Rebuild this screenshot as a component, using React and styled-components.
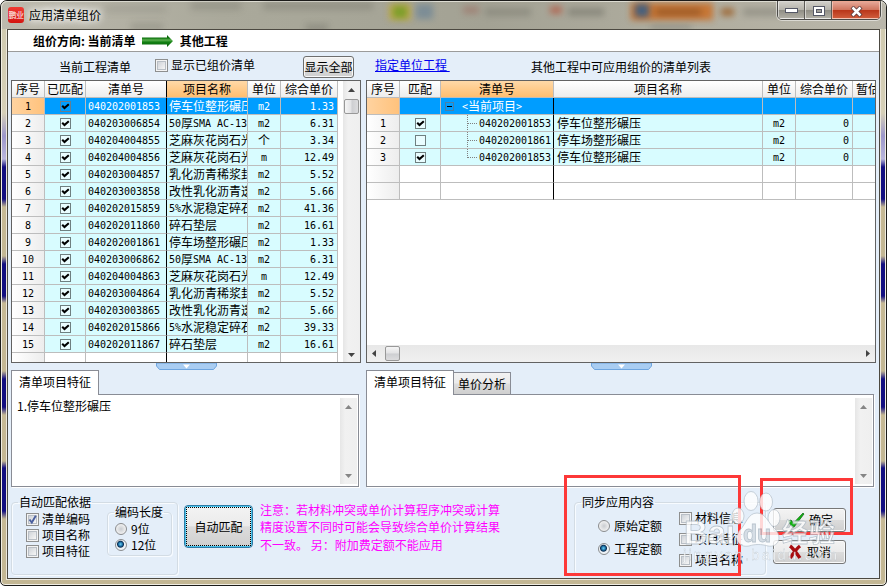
import React, { useState } from 'react';
import styled, { createGlobalStyle, css } from 'styled-components';

const UI_FONT = '"Noto Sans CJK SC", sans-serif';

const GlobalStyle = createGlobalStyle`
  body {
    margin: 0;
    overflow: hidden;
    font: 12px/16px ${UI_FONT};
    color: #000;
  }
  * {
    box-sizing: border-box;
  }
`;

const Window = styled.div`
  position: relative;
  width: 887px;
  height: 586px;
  overflow: hidden;
  border: 1px solid #1c1c1a;
  border-radius: 7px 7px 5px 5px;
  background: linear-gradient(
    #cfc9ae 0, #d6d0b8 112px, #9c97cb 135px, #b9b6dc 158px, #120e80 166px, #120e80 198px,
    #c6b995 206px, #c3b794 255px, #120e80 263px, #120e80 295px, #c6b995 302px, #c3b794 370px,
    #120e80 378px, #120e80 406px, #c6b995 414px, #c3b794 460px, #120e80 467px, #120e80 510px,
    #c6b995 518px, #c3b794 100%
  );
  box-shadow: inset 0 0 0 1px #f0ede2;
`;

const TitleBar = styled.header`
  position: relative;
  display: flex;
  align-items: flex-start;
  height: 28px;
  overflow: hidden;
  border-radius: 6px 6px 0 0;
  background: linear-gradient(90deg, #bdbaae, #aaa99b 25%, #a3a294 55%, #b1aea0 80%, #bab7ab);
  box-shadow: inset 0 1px 0 #dddcd2, inset 1px 0 0 #e8e6db;
`;

/* toolbar of the window behind, seen through the glass */
const Smudge = styled.i`
  position: absolute;
  left: ${({ $x }) => $x}px;
  top: ${({ $y = 5 }) => $y}px;
  width: ${({ $w }) => $w}px;
  height: ${({ $h = 8 }) => $h}px;
  background: ${({ $color = '#77766c' }) => $color};
  opacity: ${({ $alpha = 0.45 }) => $alpha};
  filter: blur(3px);
`;

const Logo = styled.span`
  width: 16px;
  height: 16px;
  margin: 6px 5px 0 7px;
  border-radius: 3px;
  background: linear-gradient(#ef3a33, #d4140f);
  color: #fff;
  font-size: 8px;
  line-height: 15px;
  text-align: center;
  letter-spacing: -0.5px;
  position: relative;
`;

const Title = styled.h1`
  position: relative;
  flex: 1;
  margin: 5px 0 0;
  font-size: 12px;
  font-weight: 400;
  line-height: 17px;
  text-shadow: 0 0 6px #fff, 0 0 8px #fff, 0 0 12px #fff;
`;

const WindowButtons = styled.div`
  position: relative;
  display: flex;
  width: 104px;
  height: 20px;
  margin: -1px 5px 0 0;
  overflow: hidden;
  border: 1px solid #4b4a47;
  border-radius: 0 0 5px 5px;
  box-shadow: 0 0 0 1px rgba(255, 255, 255, 0.5);
`;

const WindowButton = styled.button`
  display: flex;
  align-items: center;
  justify-content: center;
  width: ${({ $close }) => ($close ? 48 : 27)}px;
  padding: 2px 0 0;
  border: 1px solid rgba(255, 255, 255, 0.55);
  background: linear-gradient(#d0cec8, #b5b3ab 48%, #8f8d84 50%, #b0aea4);
  & + & {
    box-shadow: -1px 0 0 #5d5b57;
  }
  ${({ $close }) => $close && css`
    border-color: rgba(255, 220, 205, 0.6);
    background: linear-gradient(#e5a696, #d0765f 48%, #b83519 50%, #cf5b3b);
  `}
`;

const Client = styled.main`
  width: 873px;
  height: 550px;
  margin-left: 6px;
  border: 1px solid #4c4941;
  background: #e4eef9;
  box-shadow: 0 0 0 1px #ebe7dc;
`;

const DirectionBar = styled.div`
  display: flex;
  align-items: center;
  height: 22px;
  padding-left: 25px;
  border-bottom: 1px solid #9b9b9b;
  background: #fff;
  font-weight: 700;
  svg {
    margin: 0 7px 0 6px;
  }
`;

const ToolRow = styled.div`
  display: flex;
  align-items: flex-start;
  height: 28px;
  padding: 5px 0 0 51px;
`;

const Caption = styled.span`
  margin-top: ${({ $top = 2 }) => $top}px;
  width: ${({ $width }) => $width}px;
  white-space: nowrap;
`;

const ShowAll = styled.button`
  width: 51px;
  height: 22px;
  margin: -1px 21px 0 0;
  padding: 0;
  border: 1px solid #6e6e6e;
  border-radius: 3px;
  background: linear-gradient(#f2f2f2, #e9e9e9 48%, #dadada 52%, #cfcfcf);
  box-shadow: inset 0 0 0 1px #f8f8f8;
  font: 12px/18px ${UI_FONT};
  white-space: nowrap;
`;

const UnitLink = styled.a`
  width: 156px;
  color: #0000f0;
  text-decoration: underline;
  white-space: pre;
  line-height: 16px;
`;

const Tables = styled.div`
  display: flex;
  gap: 5px;
  height: 283px;
  padding-left: 3px;
`;

const GridFrame = styled.div`
  display: flex;
  flex-direction: ${({ $column }) => ($column ? 'column' : 'row')};
  justify-content: space-between;
  width: ${({ $width }) => $width}px;
  border: 1px solid #626262;
  background: #fff;
  overflow: hidden;
`;

const GridBody = styled.div`
  overflow: hidden;
`;

const GridRow = styled.div`
  display: grid;
  grid-template-columns: ${({ $columns }) => $columns};
  height: 17px;
`;

const Cell = styled.div`
  display: flex;
  align-items: center;
  justify-content: ${({ $align = 'center' }) => $align};
  min-width: 0;
  height: 17px;
  padding: ${({ $pad = '0' }) => $pad};
  overflow: hidden;
  border-right: 1px solid ${({ $divider }) => ($divider ? '#000' : '#bdbdbd')};
  border-bottom: 1px solid #bdbdbd;
  background: ${({ $bg = '#d8fcff' }) => $bg};
  color: ${({ $color = '#000' }) => $color};
  line-height: 16px;
  white-space: pre;
`;

const Ascii = styled.span`
  padding-top: 1px;
  font: 10px/16px "DejaVu Sans Mono", monospace;
  letter-spacing: -0.02px;
`;

const Box = styled.span`
  display: flex;
  flex: none;
  align-items: center;
  justify-content: center;
  width: 11px;
  height: 11px;
  border: 1px solid ${({ $dim }) => ($dim ? '#667e90' : '#6f7f80')};
  background: ${({ $dim }) => ($dim ? 'transparent' : '#e9fdff')};
`;

const TreeNode = styled.span`
  align-self: stretch;
  flex: none;
  width: 10px;
  height: ${({ $last }) => ($last ? 9 : 17)}px;
  margin-right: 2px;
  border-left: 1px dotted #808080;
  background: repeating-linear-gradient(90deg, #808080 0 1px, transparent 1px 2px) 0 8px / 10px 1px no-repeat;
`;

const TreeToggle = styled.span`
  display: flex;
  align-items: center;
  justify-content: center;
  width: 9px;
  height: 9px;
  margin-right: 8px;
  border: 1px solid #4c7fa5;
  &::after {
    content: '';
    width: 5px;
    height: 1px;
    background: #000;
  }
`;

const VScroll = styled.div`
  display: flex;
  flex-direction: column;
  align-items: center;
  width: 17px;
  padding: ${({ $pad = '7px 0 5px' }) => $pad};
  background: linear-gradient(90deg, #e6e6e6, #f1f1f1 30%, #efefef);
`;

const HScroll = styled.div`
  display: flex;
  align-items: center;
  height: 17px;
  padding: 0 5px 0 5px;
  background: linear-gradient(#e8e8e8, #f0f0f0);
`;

const Thumb = styled.span`
  width: 15px;
  height: 15px;
  border: 1px solid #989898;
  border-radius: 2px;
  background: linear-gradient(${({ $angle = 180 }) => $angle}deg, #f5f5f5, #e2e2e4 48%, #cdced1 52%, #dcdcde);
`;

const Spacer = styled.span`
  flex: 1;
`;

const Splitters = styled.div`
  display: flex;
  height: 7px;
  padding-left: 148px;
  gap: 374px;
`;

const Details = styled.div`
  display: flex;
  gap: 7px;
  padding-left: 3px;
`;

const Detail = styled.section`
  width: ${({ $width }) => $width}px;
`;

const Tabs = styled.div`
  display: flex;
  align-items: flex-end;
  height: 24px;
`;

const Tab = styled.button`
  width: ${({ $active }) => ($active ? 88 : 57)}px;
  height: ${({ $active }) => ($active ? 25 : 22)}px;
  margin-bottom: ${({ $active }) => ($active ? -1 : 0)}px;
  padding: 0 0 ${({ $active }) => ($active ? 2 : 0)}px;
  border: 1px solid #898c95;
  border-bottom: 0;
  border-left-width: ${({ $active }) => ($active ? 1 : 0)}px;
  background: ${({ $active }) => ($active ? '#fff' : 'linear-gradient(#f2f2f2, #ebebeb 48%, #dddddd 52%, #cfcfcf)')};
  font: 12px/16px ${UI_FONT};
  white-space: nowrap;
  position: relative;
`;

const Memo = styled.div`
  display: flex;
  justify-content: space-between;
  height: 93px;
  padding: 3px 1px 2px 5px;
  border: 1px solid #898c95;
  background: #fff;
  box-shadow: 1px 1px 0 #fff;
`;

const Footer = styled.footer`
  display: flex;
  align-items: flex-start;
  padding: 7px 0 0 3px;
`;

const Group = styled.fieldset`
  display: flex;
  flex: none;
  width: ${({ $width }) => $width}px;
  height: ${({ $height }) => $height}px;
  min-width: 0;
  margin: ${({ $margin = '0' }) => $margin};
  padding: 0;
  border: 1px solid #d3dce4;
  border-radius: 4px;
  box-shadow: inset 1px 1px 0 #f7fbff, 1px 1px 0 #f7fbff;
  legend {
    height: 16px;
    margin-left: 6px;
    padding: 0 1px;
  }
`;

const Options = styled.div`
  display: flex;
  flex-direction: column;
  gap: ${({ $gap = 0 }) => $gap}px;
  padding: ${({ $pad }) => $pad};
`;

const Option = styled.label`
  display: flex;
  align-items: center;
  gap: ${({ $gap = 3 }) => $gap}px;
  height: 16px;
  white-space: nowrap;
`;

const Check = styled.span`
  display: flex;
  flex: none;
  width: 13px;
  height: 13px;
  border: 1px solid #8e8f8f;
  background: linear-gradient(135deg, #c4c9d0, #f5f5f5 80%);
  box-shadow: inset 0 0 0 1px #f4f4f4, inset 0 0 0 2px #b9bfc6;
`;

const Radio = styled.span`
  flex: none;
  width: 12px;
  height: 12px;
  border: 1px solid #8a8c8e;
  border-radius: 50%;
  background: ${({ $on }) => ($on
    ? 'radial-gradient(circle at 45% 42%, #6cd0f4 0, #1c6fa5 2px, #0b2e52 3px, #eef3f7 4px)'
    : 'radial-gradient(circle, #c9ccd0, #f3f3f3 75%)')};
`;

const MatchButton = styled.button`
  width: 69px;
  height: 43px;
  margin: 11px 7px 0 6px;
  padding: 1px;
  border: 1px solid #2f7ba5;
  border-radius: 4px;
  background: linear-gradient(#f3f3f3, #ebebeb 48%, #dcdcdc 51%, #cfcfcf);
  box-shadow: inset 0 0 0 1px #48c4ee;
  font: 12px/16px ${UI_FONT};
  span {
    display: flex;
    align-items: center;
    justify-content: center;
    height: 100%;
    border: 1px dotted #000;
  }
`;

const Notice = styled.p`
  width: 314px;
  margin: 7px 0 0;
  color: #ff00ff;
  line-height: 17.3px;
  white-space: pre;
`;

const Actions = styled.div`
  display: flex;
  flex-direction: column;
  gap: 8px;
  padding: 14px 0 0 7px;
`;

const Action = styled.button`
  display: flex;
  align-items: center;
  gap: 4px;
  width: 73px;
  height: 24px;
  padding: 0 0 0 13px;
  border: 1px solid #777;
  border-radius: 3px;
  background: linear-gradient(#f3f3f3, #ebebeb 48%, #dcdcdc 51%, #cfcfcf);
  box-shadow: inset 0 0 0 1px #fafafa;
  font: 12px/16px ${UI_FONT};
`;

const Marker = styled.div`
  position: absolute;
  left: ${({ $x }) => $x}px;
  top: ${({ $y }) => $y}px;
  width: ${({ $w }) => $w}px;
  height: ${({ $h }) => $h}px;
  border: 3px solid #fd3838;
`;

const Watermark = styled.svg`
  position: absolute;
  left: 679px;
  top: 484px;
  pointer-events: none;
`;

const LEFT_COLUMNS = '33px 41px 81px 81px 33px 57px';
const RIGHT_COLUMNS = '33px 41px 113px 209px 33px 57px 57px';
const HEAD = 'linear-gradient(#ffffff, #ececec)';
const HEAD_ACTIVE = 'linear-gradient(#ffd9a8, #ffbe70)';
const INDEX = 'linear-gradient(90deg, #ffffff, #ededed)';
const INDEX_ACTIVE = 'linear-gradient(90deg, #ffd3a0, #ffc27c)';
const SELECTED = '#009dff';

const items = [
  ['040202001853', '停车位整形碾压', 'm2', '1.33'],
  ['040203006854', '50厚SMA AC-13', 'm2', '6.31'],
  ['040204004855', '芝麻灰花岗石光', '个', '3.34'],
  ['040204004856', '芝麻灰花岗石光', 'm', '12.49'],
  ['040203004857', '乳化沥青稀浆封', 'm2', '5.52'],
  ['040203003858', '改性乳化沥青透', 'm2', '5.66'],
  ['040202015859', '5%水泥稳定碎石', 'm2', '41.36'],
  ['040202011860', '碎石垫层', 'm2', '16.61'],
  ['040202001861', '停车场整形碾压', 'm2', '1.33'],
  ['040203006862', '50厚SMA AC-13', 'm2', '6.31'],
  ['040204004863', '芝麻灰花岗石光', 'm', '12.49'],
  ['040203004864', '乳化沥青稀浆封', 'm2', '5.52'],
  ['040203003865', '改性乳化沥青透', 'm2', '5.66'],
  ['040202015866', '5%水泥稳定碎石', 'm2', '39.33'],
  ['040202011867', '碎石垫层', 'm2', '16.61'],
];

const candidates = [
  { code: '040202001853', name: '停车位整形碾压', matched: true },
  { code: '040202001861', name: '停车场整形碾压', matched: false },
  { code: '040202001853', name: '停车位整形碾压', matched: true },
];

// latin runs use the narrow fixed-width face, the rest stays in the CJK one
const Mixed = ({ children }) => children
  .split(/([\x20-\x7e]+)/)
  .filter(Boolean)
  .map((part, index) => (/^[\x20-\x7e]/.test(part) ? <Ascii key={index}>{part}</Ascii> : <span key={index}>{part}</span>));

const CheckMark = ({ color = '#000' }) => (
  <svg width="9" height="9" viewBox="0 0 9 9">
    <path d="M1.2 3.8 L3.5 6 L7.8 2.2" fill="none" stroke={color} strokeWidth="2.1" />
  </svg>
);

// taller tick of the themed check boxes
const BlueTick = () => (
  <svg width="11" height="11" viewBox="0 0 11 11">
    <path d="M2.5 5.500 L4.8 8.500 L8.800 1.800" fill="none" stroke="#4a5f9e" strokeWidth="1.9" />
  </svg>
);

const GridCheck = ({ checked, dim }) => (
  <Box $dim={dim}>{checked && <CheckMark />}</Box>
);

const Arrow = ({ dir, color = '#444' }) => {
  const points = {
    up: '0,4 3.5,0 7,4',
    down: '0,0 7,0 3.5,4',
    left: '4,0 4,7 0,3.5',
    right: '0,0 4,3.5 0,7',
  };
  const flat = dir === 'up' || dir === 'down';
  return (
    <svg width={flat ? 7 : 4} height={flat ? 4 : 7}>
      <polygon points={points[dir]} fill={color} />
    </svg>
  );
};

const Handle = () => (
  <svg width="61" height="7" viewBox="0 0 61 7">
    <path d="M0.5 0 V3 L3.5 6.5 H57.5 L60.5 3 V0 Z" fill="#a9cdf2" stroke="#6fa6e0" />
    <path d="M27 1.5 H34 L30.5 5.5 Z" fill="#fff" />
  </svg>
);

const GreenArrow = () => (
  <svg width="31" height="12" viewBox="0 0 31 12">
    <defs>
      <linearGradient id="shaft" x1="0" y1="0" x2="0" y2="1">
        <stop offset="0" stopColor="#0a5f0a" />
        <stop offset="0.25" stopColor="#0c720c" />
        <stop offset="0.42" stopColor="#5cb050" />
        <stop offset="0.6" stopColor="#128012" />
        <stop offset="1" stopColor="#0a5f0a" />
      </linearGradient>
    </defs>
    <path d="M0 2.500 H25 V0 L31 6 L25 12 V9.500 H0 Z" fill="url(#shaft)" />
  </svg>
);

function LeftGrid() {
  const heads = ['序号', '已匹配', '清单号', '项目名称', '单位', '综合单价'];
  return (
    <GridFrame $width={350}>
      <GridBody>
        <GridRow $columns={LEFT_COLUMNS}>
          {heads.map((head, index) => (
            <Cell key={head} $bg={index === 3 ? HEAD_ACTIVE : HEAD} $divider={index === 2}>{head}</Cell>
          ))}
        </GridRow>
        {items.map(([code, name, unit, price], index) => {
          const active = index === 0;
          const tone = active ? { $bg: SELECTED, $color: '#fff' } : {};
          return (
            <GridRow key={code} $columns={LEFT_COLUMNS}>
              <Cell $bg={active ? INDEX_ACTIVE : INDEX}><Mixed>{String(index + 1)}</Mixed></Cell>
              <Cell {...tone}><GridCheck checked dim={active} /></Cell>
              <Cell {...tone} $divider $align="flex-start" $pad="0 0 0 2px"><Mixed>{code}</Mixed></Cell>
              <Cell {...tone} $align="flex-start" $pad="0 0 0 2px"><Mixed>{name}</Mixed></Cell>
              <Cell {...tone}><Mixed>{unit}</Mixed></Cell>
              <Cell {...tone} $align="flex-end" $pad="0 3px 0 0"><Mixed>{price}</Mixed></Cell>
            </GridRow>
          );
        })}
        <GridRow $columns={LEFT_COLUMNS}>
          {heads.map((head, index) => (
            <Cell key={head} $bg={index === 0 ? INDEX : '#fff'} $divider={index === 2} />
          ))}
        </GridRow>
      </GridBody>
      <VScroll>
        <Arrow dir="up" />
        <Thumb $angle={90} style={{ marginTop: 7 }} />
        <Spacer />
        <Arrow dir="down" />
      </VScroll>
    </GridFrame>
  );
}

function RightGrid() {
  const heads = ['序号', '匹配', '清单号', '项目名称', '单位', '综合单价', '暂估单价'];
  return (
    <GridFrame $width={510} $column>
      <GridBody>
        <GridRow $columns={RIGHT_COLUMNS}>
          {heads.map((head, index) => (
            <Cell
              key={head}
              $bg={index === 2 ? HEAD_ACTIVE : HEAD}
              $align={index === 6 ? 'flex-start' : 'center'}
              $pad={index === 6 ? '0 0 0 3px' : '0'}
            >
              {head}
            </Cell>
          ))}
        </GridRow>
        <GridRow $columns={RIGHT_COLUMNS}>
          {heads.map((head, index) => (
            <Cell
              key={head}
              $bg={index === 0 ? INDEX_ACTIVE : SELECTED}
              $color="#fff"
              $divider={index === 2}
              $align="flex-start"
              $pad="0 0 0 4px"
            >
              {index === 2 && (
                <>
                  <TreeToggle />
                  <Mixed>{'<当前项目>'}</Mixed>
                </>
              )}
            </Cell>
          ))}
        </GridRow>
        {candidates.map(({ code, name, matched }, index) => (
          <GridRow key={index} $columns={RIGHT_COLUMNS}>
            <Cell $bg={INDEX}><Mixed>{String(index + 1)}</Mixed></Cell>
            <Cell><GridCheck checked={matched} /></Cell>
            <Cell $divider $align="flex-end" $pad="0 2px 0 0">
              <TreeNode $last={index === candidates.length - 1} />
              <Mixed>{code}</Mixed>
            </Cell>
            <Cell $align="flex-start" $pad="0 0 0 3px">{name}</Cell>
            <Cell><Mixed>m2</Mixed></Cell>
            <Cell $align="flex-end" $pad="0 3px 0 0"><Mixed>0</Mixed></Cell>
            <Cell />
          </GridRow>
        ))}
        {[0, 1].map((row) => (
          <GridRow key={row} $columns={RIGHT_COLUMNS}>
            {heads.map((head, index) => (
              <Cell key={head} $bg={index === 0 ? INDEX : '#fff'} $divider={index === 2} />
            ))}
          </GridRow>
        ))}
      </GridBody>
      <HScroll>
        <Arrow dir="left" />
        <Thumb style={{ marginLeft: 9 }} />
        <Spacer />
        <Arrow dir="right" />
      </HScroll>
    </GridFrame>
  );
}

const MemoScroll = () => (
  <VScroll $pad="7px 0 6px">
    <Arrow dir="up" color="#858585" />
    <Spacer />
    <Arrow dir="down" color="#858585" />
  </VScroll>
);

const CheckOption = ({ label, checked }) => (
  <Option>
    <Check>{checked && <BlueTick />}</Check>
    {label}
  </Option>
);

const RadioOption = ({ label, on, onSelect }) => (
  <Option $gap={4} onClick={onSelect}>
    <Radio $on={on} />
    {label}
  </Option>
);

function BottomBar() {
  const [length, setLength] = useState('12位');
  const [quota, setQuota] = useState('工程定额');

  return (
    <Footer>
      <Group $width={167} $height={81}>
        <legend>自动匹配依据</legend>
        <Options $pad="1px 0 0 14px">
          <CheckOption label="清单编码" checked />
          <CheckOption label="项目名称" />
          <CheckOption label="项目特征" />
        </Options>
        <Group $width={65} $height={52} $margin="-6px 0 0 17px">
          <legend>编码长度</legend>
          <Options $pad="1px 0 0 7px">
            {['9位', '12位'].map((label) => (
              <RadioOption key={label} label={label} on={label === length} onSelect={() => setLength(label)} />
            ))}
          </Options>
        </Group>
      </Group>
      <MatchButton><span>自动匹配</span></MatchButton>
      <Notice>
        {'注意：若材料冲突或单价计算程序冲突或计算\n精度设置不同时可能会导致综合单价计算结果\n不一致。 另：附加费定额不能应用'}
      </Notice>
      <Group $width={192} $height={81}>
        <legend>同步应用内容</legend>
        <Options $pad="8px 0 0 23px" $gap={7}>
          {['原始定额', '工程定额'].map((label) => (
            <RadioOption key={label} label={label} on={label === quota} onSelect={() => setQuota(label)} />
          ))}
        </Options>
        <Options $pad="0 0 0 17px" $gap={5}>
          <CheckOption label="材料信息" />
          <CheckOption label="项目特征" />
          <CheckOption label="项目名称" />
        </Options>
      </Group>
      <Actions>
        <Action>
          <svg width="18" height="16" viewBox="0 0 18 16">
            <path d="M1 9 L4 8 L6.500 11 L16 1 L17 2 L7 15 L5 15 Z" fill="#12b512" stroke="#08600c" strokeWidth="0.7" />
          </svg>
          确定
        </Action>
        <Action>
          <svg width="16" height="16" viewBox="0 0 16 16">
            <path d="M3 2 C6 4 10 10 13 14 M13 2 C9 5 6 10 3 14" fill="none" stroke="#a80c10" strokeWidth="3.4" />
          </svg>
          取消
        </Action>
      </Actions>
    </Footer>
  );
}

const PawWatermark = () => (
  <Watermark width="170" height="84" viewBox="0 0 170 84" fill="#fff" stroke="#aebac4" strokeWidth="0.8">
    <g opacity="0.8">
      <ellipse cx="71" cy="16" rx="7" ry="9.500" />
      <ellipse cx="86" cy="17" rx="6.500" ry="9" />
      <ellipse cx="58" cy="31" rx="6" ry="8" />
      <ellipse cx="94" cy="33" rx="6" ry="8.500" />
      <path d="M77 28 C86 28 88 38 95 44 C103 52 98 63 88 61 C81 59 75 59 69 61 C58 63 53 53 60 45 C66 39 68 28 77 28 Z" />
      <text x="4" y="59" fontFamily="Liberation Sans" fontWeight="700" fontSize="33" textLength="51">Bai</text>
      <text x="63" y="57" fontFamily="Liberation Sans" fontWeight="700" fontSize="23" fill="#d3dbe2">du</text>
      <text x="102" y="57" fontFamily="Noto Sans CJK SC" fontWeight="700" fontSize="26" textLength="53">经验</text>
    </g>
    <text
      x="3"
      y="75"
      fontFamily="Liberation Sans"
      fontSize="15"
      textLength="154"
      strokeWidth="0.3"
      opacity="0.8"
    >
      jingyan.baidu.com
    </text>
  </Watermark>
);

export default function App() {
  return (
    <>
      <GlobalStyle />
      <Window>
        <TitleBar>
          <Smudge $x={105} $w={60} $y={4} $alpha={0.2} />
          <Smudge $x={130} $w={32} $y={22} $alpha={0.3} />
          <Smudge $x={190} $w={50} $y={1} $alpha={0.35} />
          <Smudge $x={262} $w={110} $y={1} $alpha={0.4} />
          <Smudge $x={305} $w={22} $y={23} />
          <Smudge $x={388} $w={22} $y={3} $h={16} $color="#c5a93c" $alpha={0.8} />
          <Smudge $x={392} $w={14} $y={5} $h={12} $color="#6c9c22" $alpha={0.8} />
          <Smudge $x={415} $w={17} $y={3} $h={15} $color="#6c8496" $alpha={0.7} />
          <Smudge $x={462} $w={16} $color="#9a6357" />
          <Smudge $x={484} $w={46} $y={7} />
          <Smudge $x={549} $w={12} $color="#b54a33" $alpha={0.6} />
          <Smudge $x={567} $w={36} $y={7} $alpha={0.6} />
          <Smudge $x={630} $w={82} $y={2} $h={17} $color="#c9702a" $alpha={0.9} />
          <Smudge $x={634} $w={14} $y={3} $h={13} $color="#385e86" $alpha={0.9} />
          <Smudge $x={655} $w={45} $y={8} $h={6} $color="#653718" />
          <Smudge $x={650} $w={40} $y={24} $h={5} />
          <Smudge $x={720} $w={13} $y={7} $color="#985417" $alpha={0.7} />
          <Smudge $x={742} $w={42} $y={7} />
          <Logo>鹏业</Logo>
          <Title>应用清单组价</Title>
          <WindowButtons>
            <WindowButton aria-label="minimize">
              <svg width="13" height="6"><rect x="0.500" y="0.500" width="12" height="4" fill="#fff" stroke="#555866" /></svg>
            </WindowButton>
            <WindowButton aria-label="maximize">
              <svg width="12" height="10">
                <rect x="0.500" y="0.500" width="11" height="9" fill="#fff" stroke="#555866" />
                <rect x="3.500" y="3.500" width="5" height="3" fill="#a19f98" stroke="#555866" />
              </svg>
            </WindowButton>
            <WindowButton $close aria-label="close">
              <svg width="13" height="11" viewBox="0 0 13 11">
                <path d="M2 1 L11 10 M11 1 L2 10" stroke="#5a3a3c" strokeWidth="4.200" />
                <path d="M2.500 1.500 L10.500 9.500 M10.500 1.500 L2.500 9.500" stroke="#fff" strokeWidth="2.500" />
              </svg>
            </WindowButton>
          </WindowButtons>
        </TitleBar>
        <Client>
          <DirectionBar>
            组价方向: 当前清单
            <GreenArrow />
            其他工程
          </DirectionBar>
          <ToolRow>
            <Caption $width={96}>当前工程清单</Caption>
            <Option>
              <Check />
              <Caption $top={0} $width={132}>显示已组价清单</Caption>
            </Option>
            <ShowAll>显示全部</ShowAll>
            <UnitLink>指定单位工程 </UnitLink>
            <Caption>其他工程中可应用组价的清单列表</Caption>
          </ToolRow>
          <Tables>
            <LeftGrid />
            <RightGrid />
          </Tables>
          <Splitters>
            <Handle />
            <Handle />
          </Splitters>
          <Details>
            <Detail $width={348}>
              <Tabs><Tab $active>清单项目特征</Tab></Tabs>
              <Memo>
                <span>1.停车位整形碾压</span>
                <MemoScroll />
              </Memo>
            </Detail>
            <Detail $width={508}>
              <Tabs>
                <Tab $active>清单项目特征</Tab>
                <Tab>单价分析</Tab>
              </Tabs>
              <Memo>
                <span />
                <MemoScroll />
              </Memo>
            </Detail>
          </Details>
          <BottomBar />
        </Client>
        <Marker $x={563} $y={474} $w={177} $h={101} />
        <Marker $x={759} $y={477} $w={93} $h={57} />
        <PawWatermark />
      </Window>
    </>
  );
}
